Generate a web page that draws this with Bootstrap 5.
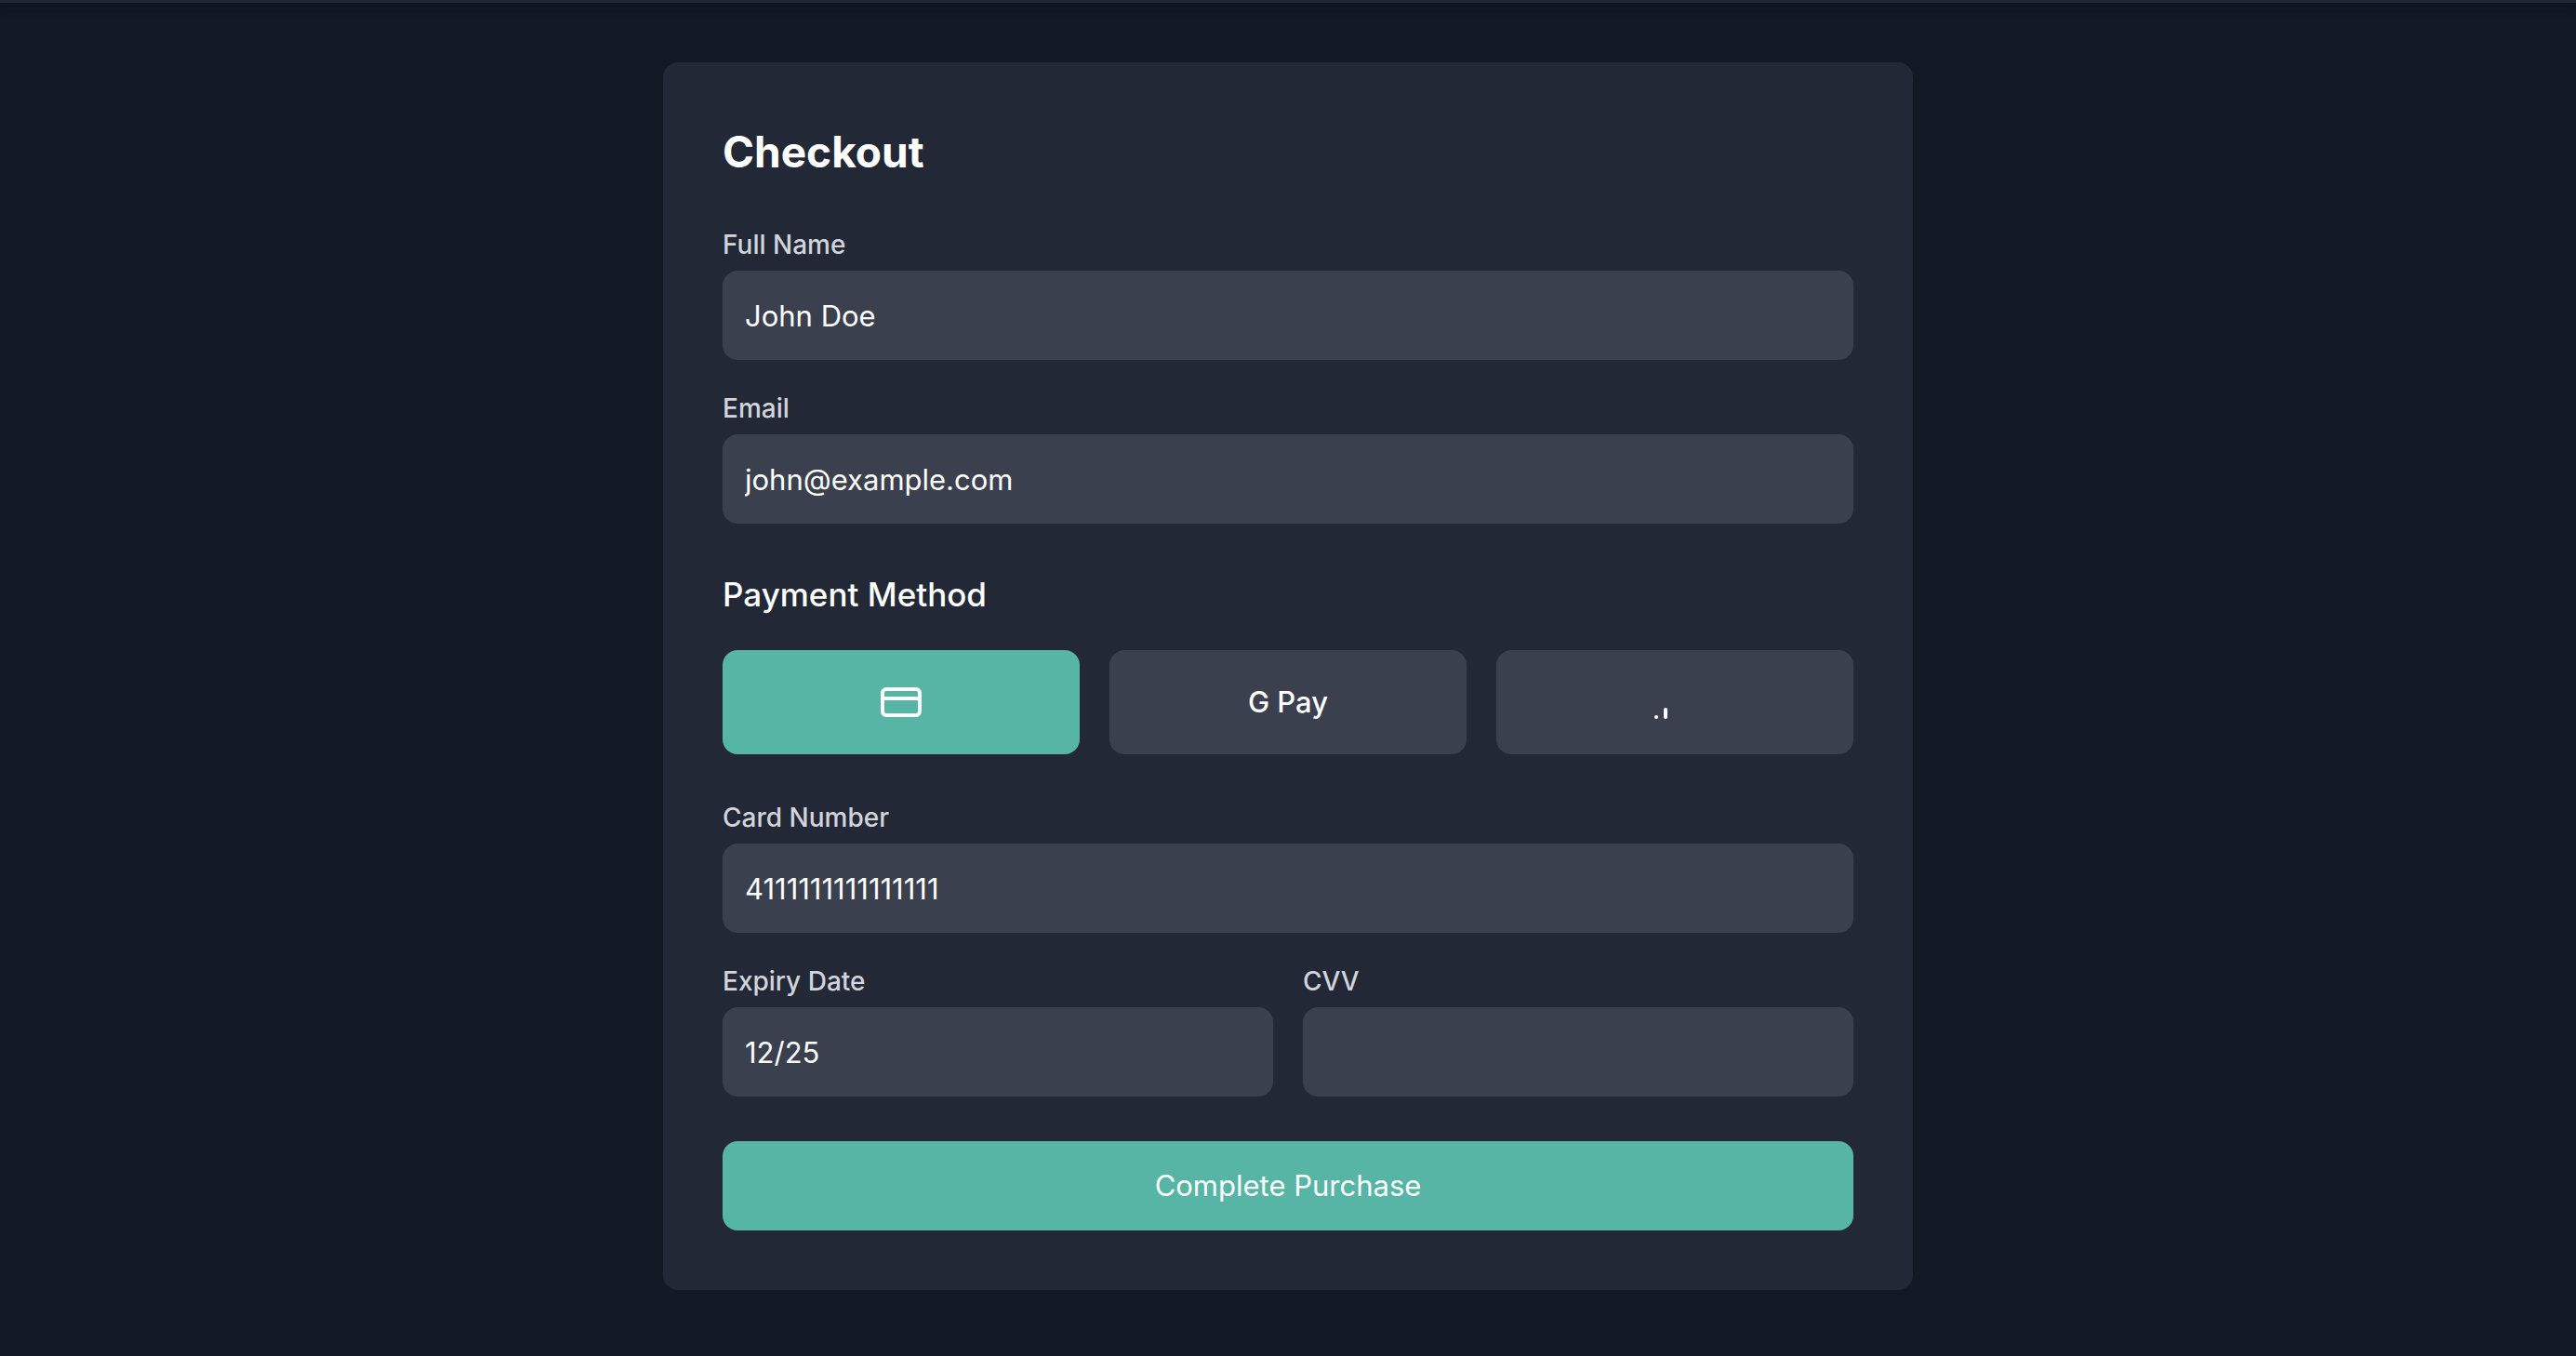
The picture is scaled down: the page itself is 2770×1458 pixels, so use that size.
<!DOCTYPE html>
<html lang="en">
<head>
<meta charset="utf-8">
<meta name="viewport" content="width=device-width, initial-scale=1">
<title>Checkout</title>
<link href="https://cdn.jsdelivr.net/npm/bootstrap@5.3.0/dist/css/bootstrap.min.css" rel="stylesheet">
<style>
  body { background: #121824; color: #fff; font-family: Inter, "Liberation Sans", sans-serif; font-size: 32px; line-height: 48px; }
  .top-strip { height: 3px; background: #222936; box-shadow: 0 4px 12px rgba(18, 18, 24, .6); }
  .page-area { padding: 64px 0; }
  .checkout-panel { max-width: 1344px; background: #222835; border-radius: 16px; padding: 64px; }
  .checkout-title { font-size: 46px; line-height: 64px; margin-bottom: 48px; }
  .section-title { font-size: 35px; line-height: 56px; margin: 48px 0 32px; }
  .field-stack { display: grid; gap: 32px; }
  .form-label { display: block; color: #d1d4dc; font-size: 28px; font-weight: 500; line-height: 40px; margin-bottom: 8px; }
  .form-control, .form-control:focus { height: 96px; padding: 24px; border: 0; border-radius: 16px; background: #3b404f; color: #fff; font-size: 31px; line-height: 48px; }
  .pay-grid { display: grid; grid-template-columns: repeat(3, 1fr); gap: 32px; margin-bottom: 48px; }
  .pay-option { --bs-btn-color: #fff; --bs-btn-bg: #3b404f; --bs-btn-hover-color: #fff; --bs-btn-hover-bg: #484e5e; --bs-btn-active-color: #fff; --bs-btn-active-bg: #56b5a5; height: 112px; border: 0; border-radius: 16px; font-size: 31px; font-weight: 500; line-height: 48px; }
  .btn-submit { --bs-btn-color: #fff; --bs-btn-bg: #56b5a5; --bs-btn-hover-color: #fff; --bs-btn-hover-bg: #489c8e; --bs-btn-active-color: #fff; --bs-btn-active-bg: #489c8e; height: 96px; margin-top: 48px; border: 0; border-radius: 16px; font-size: 31px; line-height: 48px; }
  .row-fields { --bs-gutter-x: 32px; --bs-gutter-y: 32px; }
  .line-icon { width: 48px; height: 48px; fill: none; stroke: currentColor; stroke-width: 2; stroke-linecap: round; stroke-linejoin: round; }
</style>
</head>
<body>
<div class="top-strip"></div>
<main class="page-area">
  <section class="checkout-panel mx-auto">
    <h1 class="checkout-title fw-bold">Checkout</h1>
    <form>
      <div class="field-stack">
        <div>
          <label class="form-label" for="fullName">Full Name</label>
          <input class="form-control" type="text" id="fullName" value="John Doe">
        </div>
        <div>
          <label class="form-label" for="email">Email</label>
          <input class="form-control" type="email" id="email" value="john@example.com">
        </div>
      </div>
      <h2 class="section-title fw-medium">Payment Method</h2>
      <div class="pay-grid" role="group" aria-label="Payment Method">
        <button type="button" class="btn pay-option active d-flex align-items-center justify-content-center" aria-pressed="true" aria-label="Card">
          <svg class="line-icon" viewBox="0 0 24 24" aria-hidden="true"><rect x="2" y="5" width="20" height="14" rx="2"/><path d="M2 10h20"/></svg>
        </button>
        <button type="button" class="btn pay-option d-flex align-items-center justify-content-center" aria-pressed="false">G Pay</button>
        <button type="button" class="btn pay-option d-flex align-items-center justify-content-center" aria-pressed="false" aria-label="Mobile">
          <svg class="line-icon" viewBox="0 0 24 24" aria-hidden="true"><path d="M2 20h.01"/><path d="M7 20v-4"/></svg>
        </button>
      </div>
      <div class="row row-fields">
        <div class="col-12">
          <label class="form-label" for="cardNumber">Card Number</label>
          <input class="form-control" type="text" id="cardNumber" inputmode="numeric" value="4111111111111111">
        </div>
        <div class="col-6">
          <label class="form-label" for="expiry">Expiry Date</label>
          <input class="form-control" type="text" id="expiry" value="12/25">
        </div>
        <div class="col-6">
          <label class="form-label" for="cvv">CVV</label>
          <input class="form-control" type="text" id="cvv" inputmode="numeric">
        </div>
      </div>
      <button type="submit" class="btn btn-submit w-100">Complete Purchase</button>
    </form>
  </section>
</main>
<script src="https://cdn.jsdelivr.net/npm/bootstrap@5.3.0/dist/js/bootstrap.bundle.min.js"></script>
</body>
</html>
